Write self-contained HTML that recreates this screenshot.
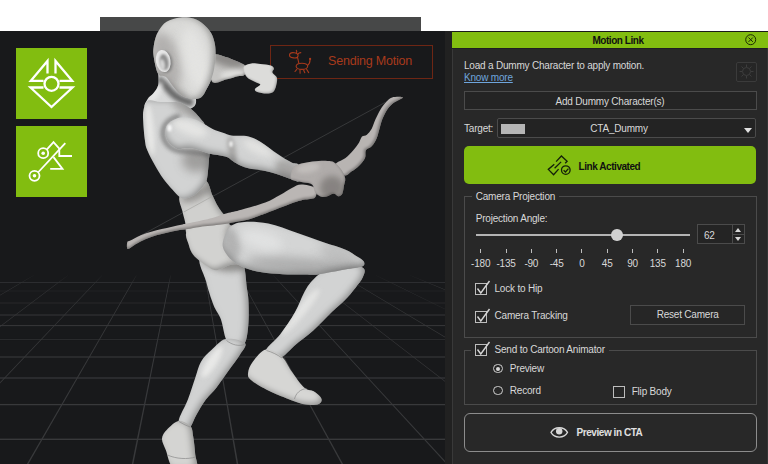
<!DOCTYPE html>
<html><head><meta charset="utf-8"><title>Motion Link</title>
<style>
html,body{margin:0;padding:0;}
body{width:768px;height:464px;overflow:hidden;background:#fff;position:relative;font-family:"Liberation Sans",sans-serif;}
.abs{position:absolute;}

#panel{left:452px;top:31px;width:316px;height:433px;background:#282828;color:#d8d8d8;font-size:10px;letter-spacing:-0.2px;}
#panel .t{position:absolute;white-space:nowrap;line-height:12px;}
#panel .box{position:absolute;box-sizing:border-box;border:1px solid #4b4b4b;}
#panel .cb{position:absolute;box-sizing:border-box;width:12px;height:12px;border:1px solid #bdbdbd;background:#262626;}
.b{font-weight:bold;letter-spacing:-0.45px;}

</style></head><body>
<div class="abs" style="left:100px;top:17px;width:321px;height:14px;background:#474848;"></div>
<div class="abs" style="left:0;top:31px;width:445px;height:433px;background:#18191b;"></div>
<div class="abs" style="left:445px;top:31px;width:7px;height:433px;background:#212121;"></div>
<svg class="abs" style="left:0;top:0" width="452" height="464" viewBox="0 0 452 464">

<defs>
<linearGradient id="gfade" x1="0" y1="0" x2="0" y2="1" gradientUnits="objectBoundingBox">
<stop offset="0" stop-color="#fff" stop-opacity="0"/><stop offset="0.06" stop-color="#fff" stop-opacity="1"/><stop offset="1" stop-color="#fff"/>
</linearGradient>
<mask id="gmask"><rect x="0" y="273" width="445" height="200" fill="url(#gfade)"/></mask>
<clipPath id="vp"><rect x="0" y="31" width="445" height="433"/></clipPath>
<filter id="b1" x="-100%" y="-100%" width="300%" height="300%"><feGaussianBlur stdDeviation="1"/></filter>
<filter id="b2" x="-100%" y="-100%" width="300%" height="300%"><feGaussianBlur stdDeviation="2"/></filter>
<filter id="b3" x="-100%" y="-100%" width="300%" height="300%"><feGaussianBlur stdDeviation="3"/></filter>
<filter id="b5" x="-100%" y="-100%" width="300%" height="300%"><feGaussianBlur stdDeviation="5"/></filter>
<filter id="sh" x="-20%" y="-20%" width="140%" height="140%">
<feGaussianBlur in="SourceAlpha" stdDeviation="2.5" result="bl"/>
<feOffset in="bl" dx="-2" dy="-3" result="off"/>
<feComposite in="SourceAlpha" in2="off" operator="out" result="edge"/>
<feFlood flood-color="#1a1a1a" flood-opacity="0.5"/>
<feComposite in2="edge" operator="in" result="shadow"/>
<feMerge><feMergeNode in="SourceGraphic"/><feMergeNode in="shadow"/></feMerge>
</filter>
<filter id="shR" x="-20%" y="-20%" width="140%" height="140%">
<feGaussianBlur in="SourceAlpha" stdDeviation="3" result="bl"/>
<feOffset in="bl" dx="-3.5" dy="-1" result="off"/>
<feComposite in="SourceAlpha" in2="off" operator="out" result="edge"/>
<feFlood flood-color="#1a1a1a" flood-opacity="0.6"/>
<feComposite in2="edge" operator="in" result="shadow"/>
<feMerge><feMergeNode in="SourceGraphic"/><feMergeNode in="shadow"/></feMerge>
</filter>
<filter id="shB" x="-20%" y="-20%" width="140%" height="140%">
<feGaussianBlur in="SourceAlpha" stdDeviation="3" result="bl"/>
<feOffset in="bl" dx="0" dy="-3.5" result="off"/>
<feComposite in="SourceAlpha" in2="off" operator="out" result="edge"/>
<feFlood flood-color="#1a1a1a" flood-opacity="0.6"/>
<feComposite in2="edge" operator="in" result="shadow"/>
<feMerge><feMergeNode in="SourceGraphic"/><feMergeNode in="shadow"/></feMerge>
</filter>
<filter id="shS" x="-20%" y="-20%" width="140%" height="140%">
<feGaussianBlur in="SourceAlpha" stdDeviation="1.2" result="bl"/>
<feOffset in="bl" dx="-1" dy="-1.5" result="off"/>
<feComposite in="SourceAlpha" in2="off" operator="out" result="edge"/>
<feFlood flood-color="#1a1a1a" flood-opacity="0.5"/>
<feComposite in2="edge" operator="in" result="shadow"/>
<feMerge><feMergeNode in="SourceGraphic"/><feMergeNode in="shadow"/></feMerge>
</filter>
<filter id="shBow" x="-20%" y="-20%" width="140%" height="140%">
<feGaussianBlur in="SourceAlpha" stdDeviation="0.9" result="bl"/>
<feOffset in="bl" dx="-1.6" dy="-1" result="off"/>
<feComposite in="SourceAlpha" in2="off" operator="out" result="edge"/>
<feFlood flood-color="#1a1a1a" flood-opacity="0.55"/>
<feComposite in2="edge" operator="in" result="shadow"/>
<feMerge><feMergeNode in="SourceGraphic"/><feMergeNode in="shadow"/></feMerge>
</filter>
<filter id="shBow2" x="-20%" y="-20%" width="140%" height="140%">
<feGaussianBlur in="SourceAlpha" stdDeviation="0.9" result="bl"/>
<feOffset in="bl" dx="-0.5" dy="-1.8" result="off"/>
<feComposite in="SourceAlpha" in2="off" operator="out" result="edge"/>
<feFlood flood-color="#1a1a1a" flood-opacity="0.55"/>
<feComposite in2="edge" operator="in" result="shadow"/>
<feMerge><feMergeNode in="SourceGraphic"/><feMergeNode in="shadow"/></feMerge>
</filter>
<linearGradient id="gBow" x1="0" y1="0" x2="0" y2="1"><stop offset="0" stop-color="#bcb8b6"/><stop offset="1" stop-color="#8a8684"/></linearGradient>
</defs>
<g clip-path="url(#vp)">
<g fill="#38393b" stroke="none" mask="url(#gmask)">
<polygon points="-206.0,275.3 -205.3,275.3 -1046.3,470 -1047.9,470"/>
<polygon points="-171.8,275.3 -171.1,275.3 -939.2,470 -940.8,470"/>
<polygon points="-137.5,275.3 -136.8,275.3 -832.0,470 -833.6,470"/>
<polygon points="-103.3,275.3 -102.7,275.3 -724.9,470 -726.5,470"/>
<polygon points="-69.2,275.3 -68.5,275.3 -617.8,470 -619.4,470"/>
<polygon points="-35.0,275.3 -34.3,275.3 -510.6,470 -512.2,470"/>
<polygon points="-0.8,275.3 -0.1,275.3 -403.5,470 -405.1,470"/>
<polygon points="33.5,275.3 34.2,275.3 -296.4,470 -298.0,470"/>
<polygon points="67.7,275.3 68.3,275.3 -189.2,470 -190.8,470"/>
<polygon points="101.9,275.3 102.5,275.3 -82.1,470 -83.7,470"/>
<polygon points="136.1,275.3 136.8,275.3 25.0,470 23.4,470"/>
<polygon points="170.3,275.3 171.0,275.3 132.2,470 130.6,470"/>
<polygon points="204.5,275.3 205.2,275.3 239.3,470 237.7,470"/>
<polygon points="238.7,275.3 239.3,275.3 346.4,470 344.8,470"/>
<polygon points="272.9,275.3 273.6,275.3 453.6,470 452.0,470"/>
<polygon points="307.1,275.3 307.8,275.3 560.7,470 559.1,470"/>
<polygon points="341.2,275.3 342.0,275.3 667.8,470 666.2,470"/>
<polygon points="375.4,275.3 376.2,275.3 775.0,470 773.4,470"/>
<polygon points="409.6,275.3 410.4,275.3 882.1,470 880.5,470"/>
<polygon points="443.9,275.3 444.6,275.3 989.2,470 987.6,470"/>
<polygon points="478.1,275.3 478.8,275.3 1096.4,470 1094.8,470"/>
<polygon points="512.2,275.3 513.0,275.3 1203.5,470 1201.9,470"/>
<polygon points="546.4,275.3 547.1,275.3 1310.6,470 1309.0,470"/>
<polygon points="580.6,275.3 581.4,275.3 1417.8,470 1416.2,470"/>
<polygon points="614.9,275.3 615.6,275.3 1524.9,470 1523.3,470"/>
<polygon points="649.1,275.3 649.8,275.3 1632.0,470 1630.4,470"/>
<rect x="0" y="282.09" width="445" height="0.83" opacity="1"/>
<rect x="0" y="290.57" width="445" height="0.86" opacity="0.35"/>
<rect x="0" y="302.55" width="445" height="0.90" opacity="0.55"/>
<rect x="0" y="314.53" width="445" height="0.95" opacity="1"/>
<rect x="0" y="325.11" width="445" height="0.99" opacity="1"/>
<rect x="0" y="338.98" width="445" height="1.04" opacity="0.55"/>
<rect x="0" y="356.45" width="445" height="1.10" opacity="1"/>
<rect x="0" y="377.41" width="445" height="1.18" opacity="1"/>
<rect x="0" y="403.96" width="445" height="1.28" opacity="1"/>
<rect x="0" y="438.60" width="445" height="1.41" opacity="1"/>
</g>
</g>
<!-- sending motion box -->
<rect x="270.5" y="45.5" width="162" height="33" fill="none" stroke="#6e2614" stroke-width="1"/>
<text x="328" y="65.400" font-family="Liberation Sans, sans-serif" font-size="12.5" fill="#a83a1c" letter-spacing="-0.2" >Sending Motion</text>
<g fill="none" stroke="#a83a1c" stroke-width="1.1" stroke-linecap="round" stroke-linejoin="round">
<ellipse cx="293.800" cy="55.300" rx="4.300" ry="2.600" transform="rotate(8 293.800 55.300)"/>
<path d="M296.200,53 C297,52 297,51 296.300,50.300 M298,54 C299,53 300,52.300 300.800,52.800 M297.500,57.300 C298,59 298.300,61 298.800,63 M307.500,65.500 C309,64.500 310,62.500 310.100,59.500 M296.800,69.300 L295,71.500 M300,69.800 L300.100,73.200 M303.600,70 L304.800,72.800 M306.600,69.300 L308.700,72.600"/>
<ellipse cx="301.900" cy="66.300" rx="5.800" ry="3.100"/>
<circle cx="310.100" cy="59" r="0.600"/>
</g>
<!-- green buttons -->
<rect x="16" y="48" width="71" height="71" fill="#82bd10"/>
<rect x="16" y="126" width="71" height="71" fill="#82bd10"/>
<g fill="none" stroke="#fff" stroke-width="2.300" stroke-linejoin="miter">
<path d="M43.500,80.800 H30.800 L47.500,61 V73.500"/>
<path d="M59.500,80.800 H72.200 L55.500,61 V73.500"/>
<path d="M43.500,87.500 H30.500 L51.500,107 L72.500,87.500 H59.500"/>
<circle cx="51.500" cy="83.800" r="7"/>
</g>
<g fill="none" stroke="#fff" stroke-width="1.800" stroke-linejoin="miter">
<circle cx="43.200" cy="153.200" r="5"/>
<circle cx="34.500" cy="175.800" r="5"/>
<path d="M46.500,149.800 L53.500,142.200 L59.300,148.600 V156 H72"/>
<path d="M38,172.500 L65.300,143.200"/>
<path d="M53.500,157.100 L62.500,168.900 H50.200"/>
</g>
<circle cx="43.200" cy="153.200" r="1.800" fill="#fff"/>
<circle cx="34.500" cy="175.800" r="1.800" fill="#fff"/>
<!-- figure -->
<g>
<line x1="140" y1="236" x2="385.300" y2="102.300" stroke="#454648" stroke-width="0.7"/>
<g filter="url(#shS)"><path d="M212.0,56.0 C214.3,51.9 221.6,56.0 225.6,56.9 C229.6,57.8 232.9,59.7 236.2,61.1 C239.5,62.5 243.4,63.9 245.2,65.6 C247.0,67.2 247.2,69.4 247.0,71.0 C246.8,72.6 245.2,74.5 243.7,75.4 C242.1,76.3 240.5,75.6 237.7,76.2 C234.9,76.8 231.4,78.3 227.1,79.2 C222.8,80.1 214.5,85.4 212.0,81.5 C209.5,77.6 209.7,60.1 212.0,56.0Z" fill="#c6c5c3" /><clipPath id="c1"><path d="M212.0,56.0 C214.3,51.9 221.6,56.0 225.6,56.9 C229.6,57.8 232.9,59.7 236.2,61.1 C239.5,62.5 243.4,63.9 245.2,65.6 C247.0,67.2 247.2,69.4 247.0,71.0 C246.8,72.6 245.2,74.5 243.7,75.4 C242.1,76.3 240.5,75.6 237.7,76.2 C234.9,76.8 231.4,78.3 227.1,79.2 C222.8,80.1 214.5,85.4 212.0,81.5 C209.5,77.6 209.7,60.1 212.0,56.0Z"/></clipPath><g clip-path="url(#c1)"><ellipse cx="228" cy="60" rx="18" ry="7" fill="#858381" opacity="0.9" transform="rotate(15 228 60)" filter="url(#b3)"/><ellipse cx="232" cy="74" rx="12" ry="4" fill="#e4e4e2" opacity="0.8" transform="rotate(-8 232 74)" filter="url(#b2)"/></g></g>
<path d="M243.7,67.1 C244.4,64.8 248.5,63.9 251.3,63.4 C254.1,62.9 257.0,63.7 260.3,64.1 C263.6,64.5 268.6,64.8 270.9,65.6 C273.2,66.4 273.6,67.6 273.9,68.7 C274.1,69.8 271.9,70.9 272.4,72.4 C272.9,73.9 276.3,75.6 276.9,77.7 C277.5,79.8 276.8,82.8 276.2,85.2 C275.6,87.6 274.7,90.6 273.1,92.0 C271.5,93.4 269.0,93.5 266.4,93.5 C263.8,93.5 259.2,92.8 257.3,92.0 C255.4,91.2 254.5,90.2 255.0,89.0 C255.5,87.8 260.2,85.6 260.3,84.5 C260.4,83.4 258.1,83.5 255.8,82.2 C253.6,81.0 248.8,79.5 246.8,77.0 C244.8,74.5 242.9,69.4 243.7,67.1Z" fill="#dcdcda" filter="url(#shS)" />
<g ><path d="M160.0,68.0 C156.7,69.1 159.4,80.6 158.3,84.8 C157.2,89.0 155.2,90.9 153.4,93.2 C151.7,95.5 149.0,96.3 147.8,98.8 C146.6,101.3 142.3,105.8 146.0,108.0 C149.7,110.2 162.3,112.0 170.0,112.0 C177.7,112.0 187.7,110.2 192.0,108.0 C196.3,105.8 196.3,102.3 196.0,99.0 C195.7,95.7 193.0,91.5 190.0,88.0 C187.0,84.5 183.0,81.3 178.0,78.0 C173.0,74.7 163.3,66.9 160.0,68.0Z" fill="#d8d9d9" /><clipPath id="c2"><path d="M160.0,68.0 C156.7,69.1 159.4,80.6 158.3,84.8 C157.2,89.0 155.2,90.9 153.4,93.2 C151.7,95.5 149.0,96.3 147.8,98.8 C146.6,101.3 142.3,105.8 146.0,108.0 C149.7,110.2 162.3,112.0 170.0,112.0 C177.7,112.0 187.7,110.2 192.0,108.0 C196.3,105.8 196.3,102.3 196.0,99.0 C195.7,95.7 193.0,91.5 190.0,88.0 C187.0,84.5 183.0,81.3 178.0,78.0 C173.0,74.7 163.3,66.9 160.0,68.0Z"/></clipPath><g clip-path="url(#c2)"><path d="M158,79 C163,82 166,86 170,91 C175,97 182,101 193,103" fill="none" stroke="#4a4a4a" stroke-width="7" opacity="0.8" filter="url(#b2)"/><ellipse cx="156" cy="92" rx="4" ry="12" fill="#f2f2f2" opacity="0.6" transform="rotate(30 156 92)" filter="url(#b2)"/></g></g>
<g filter="url(#shR)"><path d="M201.3,256.0 C195.6,260.2 204.0,273.0 206.0,281.1 C208.0,289.2 211.0,298.6 213.5,304.9 C216.0,311.2 218.6,313.1 220.8,319.0 C223.0,324.9 224.1,335.8 226.5,340.3 C228.9,344.8 231.9,345.6 235.0,346.0 C238.1,346.4 242.7,346.4 244.9,342.7 C247.1,339.0 247.8,330.8 248.4,323.7 C249.0,316.6 248.7,305.9 248.4,300.0 C248.2,294.1 247.6,293.6 246.9,288.3 C246.2,283.0 245.7,273.5 244.5,268.1 C243.3,262.7 247.2,258.0 240.0,256.0 C232.8,254.0 207.0,251.8 201.3,256.0Z" fill="#d2d3d3" /><clipPath id="c3"><path d="M201.3,256.0 C195.6,260.2 204.0,273.0 206.0,281.1 C208.0,289.2 211.0,298.6 213.5,304.9 C216.0,311.2 218.6,313.1 220.8,319.0 C223.0,324.9 224.1,335.8 226.5,340.3 C228.9,344.8 231.9,345.6 235.0,346.0 C238.1,346.4 242.7,346.4 244.9,342.7 C247.1,339.0 247.8,330.8 248.4,323.7 C249.0,316.6 248.7,305.9 248.4,300.0 C248.2,294.1 247.6,293.6 246.9,288.3 C246.2,283.0 245.7,273.5 244.5,268.1 C243.3,262.7 247.2,258.0 240.0,256.0 C232.8,254.0 207.0,251.8 201.3,256.0Z"/></clipPath><g clip-path="url(#c3)"><ellipse cx="224" cy="262" rx="22" ry="9" fill="#7d7b79" opacity="0.8" transform="rotate(10 224 262)" filter="url(#b3)"/></g></g>
<g filter="url(#shR)"><path d="M225.9,339.0 C220.4,340.1 215.8,346.0 211.7,349.8 C207.5,353.6 203.8,356.9 201.0,361.7 C198.2,366.4 197.3,372.0 195.1,378.3 C192.9,384.6 190.7,392.5 187.9,399.6 C185.2,406.7 179.2,416.3 178.6,421.0 C177.9,425.7 182.1,427.0 184.0,428.0 C185.9,429.0 188.3,429.0 190.3,426.9 C192.3,424.8 193.6,419.8 196.2,415.2 C198.8,410.6 202.5,404.1 205.9,399.5 C209.3,394.9 212.7,392.4 216.4,387.7 C220.1,383.0 224.4,376.6 228.3,371.1 C232.2,365.6 237.3,359.2 240.1,354.5 C242.9,349.8 247.3,345.6 244.9,343.0 C242.5,340.4 231.4,337.9 225.9,339.0Z" fill="#d2d3d3" /><clipPath id="c4"><path d="M225.9,339.0 C220.4,340.1 215.8,346.0 211.7,349.8 C207.5,353.6 203.8,356.9 201.0,361.7 C198.2,366.4 197.3,372.0 195.1,378.3 C192.9,384.6 190.7,392.5 187.9,399.6 C185.2,406.7 179.2,416.3 178.6,421.0 C177.9,425.7 182.1,427.0 184.0,428.0 C185.9,429.0 188.3,429.0 190.3,426.9 C192.3,424.8 193.6,419.8 196.2,415.2 C198.8,410.6 202.5,404.1 205.9,399.5 C209.3,394.9 212.7,392.4 216.4,387.7 C220.1,383.0 224.4,376.6 228.3,371.1 C232.2,365.6 237.3,359.2 240.1,354.5 C242.9,349.8 247.3,345.6 244.9,343.0 C242.5,340.4 231.4,337.9 225.9,339.0Z"/></clipPath><g clip-path="url(#c4)"><ellipse cx="212" cy="362" rx="5" ry="18" fill="#f2f2f0" opacity="0.7" transform="rotate(32 212 362)" filter="url(#b2)"/></g></g>
<path d="M178.6,421.0 C174.7,421.6 169.7,426.9 166.9,429.8 C164.1,432.7 162.2,435.2 162.0,438.6 C161.8,442.0 164.0,445.4 165.9,450.3 C167.8,455.2 168.7,465.1 173.7,468.0 C178.7,470.9 192.2,470.3 195.8,468.0 C199.4,465.7 195.6,459.4 195.2,454.2 C194.8,449.0 194.0,441.3 193.2,436.6 C192.4,431.9 192.7,428.6 190.3,426.0 C187.9,423.4 182.5,420.4 178.6,421.0Z" fill="#d4d4d2" filter="url(#shR)" />
<g filter="url(#shR)"><path d="M179.8,196.0 C177.7,199.6 181.6,207.1 182.5,211.5 C183.4,215.9 184.3,218.3 185.2,222.4 C186.1,226.5 184.7,233.1 188.0,236.0 C191.3,238.9 198.7,240.3 205.0,240.0 C211.3,239.7 222.0,237.0 226.0,234.0 C230.0,231.0 229.8,225.8 229.0,222.0 C228.2,218.2 223.3,214.2 221.4,211.5 C219.5,208.8 219.3,208.8 217.8,206.1 C216.3,203.4 214.4,199.4 212.4,195.2 C210.4,191.0 209.0,181.9 206.1,181.0 C203.2,180.1 199.4,187.5 195.0,190.0 C190.6,192.5 181.9,192.4 179.8,196.0Z" fill="#d0d0ce" /><clipPath id="c5"><path d="M179.8,196.0 C177.7,199.6 181.6,207.1 182.5,211.5 C183.4,215.9 184.3,218.3 185.2,222.4 C186.1,226.5 184.7,233.1 188.0,236.0 C191.3,238.9 198.7,240.3 205.0,240.0 C211.3,239.7 222.0,237.0 226.0,234.0 C230.0,231.0 229.8,225.8 229.0,222.0 C228.2,218.2 223.3,214.2 221.4,211.5 C219.5,208.8 219.3,208.8 217.8,206.1 C216.3,203.4 214.4,199.4 212.4,195.2 C210.4,191.0 209.0,181.9 206.1,181.0 C203.2,180.1 199.4,187.5 195.0,190.0 C190.6,192.5 181.9,192.4 179.8,196.0Z"/></clipPath><g clip-path="url(#c5)"><ellipse cx="196" cy="194" rx="16" ry="6" fill="#8a8886" opacity="0.8" transform="rotate(-25 196 194)" filter="url(#b3)"/></g></g>
<g filter="url(#sh)"><path d="M187.5,231.0 C183.6,234.8 187.9,241.1 188.8,245.0 C189.7,248.9 191.1,251.8 193.0,254.5 C194.9,257.2 198.2,259.6 200.5,261.5 C202.8,263.4 204.7,264.6 207.0,266.0 C209.3,267.4 212.0,269.6 214.3,270.1 C216.6,270.6 218.6,269.8 221.0,269.0 C223.4,268.2 224.9,266.6 228.6,265.4 C232.3,264.2 241.1,266.2 243.0,262.0 C244.9,257.8 241.8,246.0 240.0,240.0 C238.2,234.0 236.7,229.0 232.0,226.0 C227.3,223.0 219.4,221.2 212.0,222.0 C204.6,222.8 191.4,227.2 187.5,231.0Z" fill="#d2d2d0" /><clipPath id="c6"><path d="M187.5,231.0 C183.6,234.8 187.9,241.1 188.8,245.0 C189.7,248.9 191.1,251.8 193.0,254.5 C194.9,257.2 198.2,259.6 200.5,261.5 C202.8,263.4 204.7,264.6 207.0,266.0 C209.3,267.4 212.0,269.6 214.3,270.1 C216.6,270.6 218.6,269.8 221.0,269.0 C223.4,268.2 224.9,266.6 228.6,265.4 C232.3,264.2 241.1,266.2 243.0,262.0 C244.9,257.8 241.8,246.0 240.0,240.0 C238.2,234.0 236.7,229.0 232.0,226.0 C227.3,223.0 219.4,221.2 212.0,222.0 C204.6,222.8 191.4,227.2 187.5,231.0Z"/></clipPath><g clip-path="url(#c6)"><ellipse cx="236" cy="244" rx="9" ry="20" fill="#8a8886" opacity="0.9" transform="rotate(-15 236 244)" filter="url(#b3)"/></g></g>
<line x1="184" y1="211.9" x2="213" y2="196.0" stroke="#a6a6a4" stroke-width="0.7"/>
<g filter="url(#shR)"><path d="M160.2,102.0 C155.7,101.8 150.9,99.2 148.1,100.5 C145.3,101.8 144.3,106.5 143.5,110.0 C142.7,113.5 143.0,116.2 143.2,121.3 C143.4,126.3 144.2,135.5 144.9,140.3 C145.6,145.1 145.6,146.0 147.2,150.0 C148.8,154.0 151.8,159.7 154.5,164.5 C157.2,169.3 160.5,174.8 163.5,179.0 C166.5,183.2 169.9,186.8 172.6,189.8 C175.3,192.8 177.7,195.7 179.8,197.1 C181.9,198.5 182.8,198.8 185.2,198.5 C187.6,198.2 191.3,197.2 194.3,195.2 C197.3,193.1 201.2,188.9 203.3,186.2 C205.4,183.5 206.1,183.2 207.0,179.0 C207.9,174.8 208.4,165.7 208.8,160.9 C209.2,156.1 209.9,154.3 209.7,150.0 C209.5,145.7 208.4,139.4 207.5,135.0 C206.6,130.6 205.3,126.0 204.3,123.5 C203.3,121.0 203.4,122.0 201.6,119.9 C199.8,117.8 196.6,113.6 193.4,110.9 C190.2,108.2 185.6,105.1 182.6,103.6 C179.6,102.1 178.9,102.3 175.2,102.0 C171.5,101.7 164.7,102.2 160.2,102.0Z" fill="#d2d3d3" /><clipPath id="c7"><path d="M160.2,102.0 C155.7,101.8 150.9,99.2 148.1,100.5 C145.3,101.8 144.3,106.5 143.5,110.0 C142.7,113.5 143.0,116.2 143.2,121.3 C143.4,126.3 144.2,135.5 144.9,140.3 C145.6,145.1 145.6,146.0 147.2,150.0 C148.8,154.0 151.8,159.7 154.5,164.5 C157.2,169.3 160.5,174.8 163.5,179.0 C166.5,183.2 169.9,186.8 172.6,189.8 C175.3,192.8 177.7,195.7 179.8,197.1 C181.9,198.5 182.8,198.8 185.2,198.5 C187.6,198.2 191.3,197.2 194.3,195.2 C197.3,193.1 201.2,188.9 203.3,186.2 C205.4,183.5 206.1,183.2 207.0,179.0 C207.9,174.8 208.4,165.7 208.8,160.9 C209.2,156.1 209.9,154.3 209.7,150.0 C209.5,145.7 208.4,139.4 207.5,135.0 C206.6,130.6 205.3,126.0 204.3,123.5 C203.3,121.0 203.4,122.0 201.6,119.9 C199.8,117.8 196.6,113.6 193.4,110.9 C190.2,108.2 185.6,105.1 182.6,103.6 C179.6,102.1 178.9,102.3 175.2,102.0 C171.5,101.7 164.7,102.2 160.2,102.0Z"/></clipPath><g clip-path="url(#c7)"><ellipse cx="196" cy="160" rx="14" ry="12" fill="#8f8d8b" opacity="0.75" transform="rotate(0 196 160)" filter="url(#b5)"/><ellipse cx="186" cy="110" rx="16" ry="5" fill="#9a9896" opacity="0.7" transform="rotate(30 186 110)" filter="url(#b3)"/><ellipse cx="150" cy="130" rx="4" ry="26" fill="#f0f0ee" opacity="0.7" transform="rotate(-5 150 130)" filter="url(#b2)"/><path d="M180,116 C170,118 163,124 163,133 C163,142 170,150 180,151 C190,152 200,152 210,155" fill="none" stroke="#5a5a5a" stroke-width="4" opacity="0.75" filter="url(#b2)"/></g></g>
<g filter="url(#shR)"><path d="M180.6,17.4 C185.1,16.9 189.7,17.4 193.5,18.5 C197.3,19.6 200.3,21.6 203.2,23.9 C206.1,26.2 208.9,29.4 210.8,32.5 C212.7,35.5 213.7,38.8 214.5,42.2 C215.3,45.6 215.6,48.7 215.6,53.0 C215.6,57.3 215.1,63.4 214.3,68.0 C213.5,72.6 212.1,77.1 210.8,80.6 C209.5,84.1 208.2,86.2 206.6,89.0 C205.0,91.8 203.6,95.8 201.0,97.4 C198.4,99.0 194.5,99.2 191.2,98.8 C187.9,98.4 184.4,97.4 181.4,95.3 C178.4,93.2 175.6,89.2 173.0,86.2 C170.4,83.2 168.3,78.9 166.0,77.0 C163.7,75.1 160.8,76.8 159.0,75.0 C157.2,73.2 156.4,69.5 155.5,66.0 C154.6,62.5 153.7,57.1 153.4,54.0 C153.1,50.9 153.3,50.1 153.6,47.6 C153.9,45.1 154.3,41.9 155.2,39.0 C156.1,36.1 157.1,33.2 159.0,30.3 C160.9,27.4 163.0,23.9 166.6,21.7 C170.2,19.5 176.1,17.9 180.6,17.4Z" fill="#d9d9d7" /><clipPath id="c8"><path d="M180.6,17.4 C185.1,16.9 189.7,17.4 193.5,18.5 C197.3,19.6 200.3,21.6 203.2,23.9 C206.1,26.2 208.9,29.4 210.8,32.5 C212.7,35.5 213.7,38.8 214.5,42.2 C215.3,45.6 215.6,48.7 215.6,53.0 C215.6,57.3 215.1,63.4 214.3,68.0 C213.5,72.6 212.1,77.1 210.8,80.6 C209.5,84.1 208.2,86.2 206.6,89.0 C205.0,91.8 203.6,95.8 201.0,97.4 C198.4,99.0 194.5,99.2 191.2,98.8 C187.9,98.4 184.4,97.4 181.4,95.3 C178.4,93.2 175.6,89.2 173.0,86.2 C170.4,83.2 168.3,78.9 166.0,77.0 C163.7,75.1 160.8,76.8 159.0,75.0 C157.2,73.2 156.4,69.5 155.5,66.0 C154.6,62.5 153.7,57.1 153.4,54.0 C153.1,50.9 153.3,50.1 153.6,47.6 C153.9,45.1 154.3,41.9 155.2,39.0 C156.1,36.1 157.1,33.2 159.0,30.3 C160.9,27.4 163.0,23.9 166.6,21.7 C170.2,19.5 176.1,17.9 180.6,17.4Z"/></clipPath><g clip-path="url(#c8)"><ellipse cx="166" cy="62" rx="14" ry="30" fill="#a8a6a4" opacity="0.8" transform="rotate(-12 166 62)" filter="url(#b5)"/><ellipse cx="196" cy="60" rx="12" ry="34" fill="#e6e6e4" opacity="0.8" transform="rotate(-14 196 60)" filter="url(#b5)"/><ellipse cx="176" cy="92" rx="14" ry="5" fill="#8f8d8b" opacity="0.6" transform="rotate(35 176 92)" filter="url(#b3)"/></g></g>
<ellipse cx="165.200" cy="62" rx="7.300" ry="11.200" fill="#7a7a7a" opacity="0.8" transform="rotate(-10 165.200 62)" filter="url(#b1)"/>
<ellipse cx="163.200" cy="61" rx="7.300" ry="11.200" fill="#e6e6e6" transform="rotate(-10 163.200 61)"/>
<ellipse cx="164.200" cy="62" rx="4.300" ry="8" fill="#8e8e8e" transform="rotate(-10 164.200 62)" filter="url(#b1)"/>
<ellipse cx="162.300" cy="64.500" rx="2.600" ry="5.500" fill="#d4d4d4" transform="rotate(-10 162.300 64.500)" filter="url(#b1)"/>
<path d="M315.0,188.0 C312.7,185.8 305.2,184.4 301.3,184.4 C297.4,184.4 295.4,186.1 291.9,187.9 C288.3,189.7 284.4,192.6 280.0,195.0 C275.6,197.4 271.7,200.1 265.3,202.5 C258.9,204.9 247.8,207.9 241.4,209.7 C235.0,211.5 231.7,211.9 226.9,213.3 C222.1,214.7 218.1,216.4 212.4,217.9 C206.7,219.4 197.9,221.2 192.9,222.3 C187.9,223.4 186.0,223.7 182.5,224.4 C179.0,225.1 175.6,225.9 172.1,226.7 C168.6,227.5 165.2,228.3 161.7,229.1 C158.2,229.9 154.8,230.7 151.3,231.7 C147.8,232.7 144.3,233.8 140.8,235.3 C137.3,236.8 132.7,239.4 130.4,240.5 C128.2,241.6 127.7,240.7 127.3,242.1 C126.9,243.5 126.4,248.6 127.8,248.9 C129.2,249.2 132.6,245.8 135.6,244.2 C138.6,242.5 142.5,240.5 146.0,239.0 C149.5,237.5 153.0,236.4 156.5,235.3 C160.0,234.2 163.4,233.5 166.9,232.7 C170.4,231.9 173.8,231.2 177.3,230.6 C180.8,230.0 183.9,229.7 187.7,229.1 C191.5,228.5 194.4,227.8 200.0,227.0 C205.6,226.2 215.7,225.4 221.4,224.6 C227.1,223.8 229.6,223.0 234.1,222.2 C238.6,221.3 244.3,220.6 248.6,219.5 C252.9,218.4 256.9,216.6 260.0,215.5 C263.1,214.4 262.1,214.8 267.4,212.8 C272.7,210.8 285.8,205.5 291.9,203.3 C297.9,201.1 299.8,200.8 303.7,199.8 C307.6,198.8 313.1,199.4 315.0,197.4 C316.9,195.4 317.3,190.2 315.0,188.0Z" fill="#bab6b4" filter="url(#shBow2)" />
<g filter="url(#shR)"><path d="M330.0,268.0 C335.2,266.2 344.4,263.9 350.0,264.0 C355.6,264.1 361.7,266.2 363.8,268.5 C365.9,270.8 364.1,274.3 362.7,277.5 C361.3,280.7 358.3,284.1 355.4,287.9 C352.4,291.6 349.0,295.9 345.0,300.0 C341.0,304.1 336.9,307.2 331.6,312.3 C326.3,317.4 319.4,325.1 313.3,330.6 C307.2,336.1 300.2,340.9 295.0,345.3 C289.8,349.7 285.9,355.2 282.1,357.0 C278.3,358.8 274.7,357.2 272.0,356.0 C269.3,354.8 264.6,353.6 266.0,350.0 C267.4,346.4 275.5,340.6 280.3,334.3 C285.1,328.0 291.2,319.0 295.0,312.3 C298.8,305.6 300.9,298.9 303.3,294.2 C305.7,289.4 307.0,287.1 309.6,283.8 C312.2,280.5 315.4,277.1 318.8,274.5 C322.2,271.9 324.8,269.8 330.0,268.0Z" fill="#d2d3d3" /><clipPath id="c9"><path d="M330.0,268.0 C335.2,266.2 344.4,263.9 350.0,264.0 C355.6,264.1 361.7,266.2 363.8,268.5 C365.9,270.8 364.1,274.3 362.7,277.5 C361.3,280.7 358.3,284.1 355.4,287.9 C352.4,291.6 349.0,295.9 345.0,300.0 C341.0,304.1 336.9,307.2 331.6,312.3 C326.3,317.4 319.4,325.1 313.3,330.6 C307.2,336.1 300.2,340.9 295.0,345.3 C289.8,349.7 285.9,355.2 282.1,357.0 C278.3,358.8 274.7,357.2 272.0,356.0 C269.3,354.8 264.6,353.6 266.0,350.0 C267.4,346.4 275.5,340.6 280.3,334.3 C285.1,328.0 291.2,319.0 295.0,312.3 C298.8,305.6 300.9,298.9 303.3,294.2 C305.7,289.4 307.0,287.1 309.6,283.8 C312.2,280.5 315.4,277.1 318.8,274.5 C322.2,271.9 324.8,269.8 330.0,268.0Z"/></clipPath><g clip-path="url(#c9)"><ellipse cx="300" cy="312" rx="5" ry="30" fill="#efefed" opacity="0.6" transform="rotate(40 300 312)" filter="url(#b2)"/></g></g>
<path d="M266.0,349.5 C261.1,350.3 255.8,357.9 252.8,361.8 C249.8,365.7 248.4,369.8 248.1,372.8 C247.8,375.9 247.5,377.1 251.0,380.1 C254.5,383.2 262.6,387.8 269.3,391.1 C276.0,394.5 285.2,397.9 291.3,400.2 C297.4,402.4 301.4,404.0 306.0,404.6 C310.6,405.2 316.2,404.9 318.8,403.9 C321.4,402.9 322.2,400.5 321.3,398.4 C320.4,396.3 316.2,392.9 313.3,391.1 C310.4,389.3 307.8,390.8 304.1,387.4 C300.4,384.0 295.0,376.0 291.3,370.9 C287.6,365.8 286.3,360.6 282.1,357.0 C277.9,353.4 270.9,348.7 266.0,349.5Z" fill="#d6d6d4" filter="url(#sh)" />
<g filter="url(#shB)"><path d="M230.3,226.6 C233.9,223.4 238.2,222.4 244.5,221.9 C250.8,221.4 259.6,221.8 268.3,223.6 C277.0,225.4 287.4,229.7 296.7,232.8 C306.0,236.0 316.1,239.7 324.2,242.5 C332.2,245.3 339.4,247.0 345.0,249.4 C350.6,251.8 354.4,254.7 357.5,256.7 C360.6,258.7 363.1,259.9 363.8,261.5 C364.6,263.1 365.1,265.2 362.0,266.5 C358.9,267.8 352.4,268.2 345.0,269.5 C337.6,270.8 324.8,273.5 317.9,274.4 C310.9,275.2 309.2,274.6 303.3,274.6 C297.4,274.6 289.4,274.6 282.5,274.2 C275.6,273.8 267.9,273.3 261.7,272.3 C255.4,271.3 249.9,270.0 245.0,268.1 C240.1,266.2 236.0,263.8 232.5,260.8 C229.0,257.9 225.8,253.7 224.2,250.4 C222.6,247.1 222.2,244.8 223.2,240.8 C224.2,236.8 226.8,229.8 230.3,226.6Z" fill="#d4d5d5" /><clipPath id="c10"><path d="M230.3,226.6 C233.9,223.4 238.2,222.4 244.5,221.9 C250.8,221.4 259.6,221.8 268.3,223.6 C277.0,225.4 287.4,229.7 296.7,232.8 C306.0,236.0 316.1,239.7 324.2,242.5 C332.2,245.3 339.4,247.0 345.0,249.4 C350.6,251.8 354.4,254.7 357.5,256.7 C360.6,258.7 363.1,259.9 363.8,261.5 C364.6,263.1 365.1,265.2 362.0,266.5 C358.9,267.8 352.4,268.2 345.0,269.5 C337.6,270.8 324.8,273.5 317.9,274.4 C310.9,275.2 309.2,274.6 303.3,274.6 C297.4,274.6 289.4,274.6 282.5,274.2 C275.6,273.8 267.9,273.3 261.7,272.3 C255.4,271.3 249.9,270.0 245.0,268.1 C240.1,266.2 236.0,263.8 232.5,260.8 C229.0,257.9 225.8,253.7 224.2,250.4 C222.6,247.1 222.2,244.8 223.2,240.8 C224.2,236.8 226.8,229.8 230.3,226.6Z"/></clipPath><g clip-path="url(#c10)"><ellipse cx="232" cy="244" rx="8" ry="16" fill="#a5a5a5" opacity="0.7" transform="rotate(-10 232 244)" filter="url(#b3)"/><ellipse cx="305" cy="266" rx="60" ry="8" fill="#8f8f8f" opacity="0.55" transform="rotate(4 305 266)" filter="url(#b5)"/><ellipse cx="340" cy="256" rx="22" ry="10" fill="#a8a8a8" opacity="0.45" transform="rotate(25 340 256)" filter="url(#b5)"/><ellipse cx="262" cy="240" rx="22" ry="9" fill="#e6e7e7" opacity="0.7" transform="rotate(15 262 240)" filter="url(#b5)"/></g></g>
<g fill="none" stroke="#8c8c8c" stroke-width="0.800" opacity="0.9">
<path d="M226.500,340.500 C232,345 239,346.500 244.500,344.500"/>
<path d="M294.500,399 C296,393 300,389.500 306.500,388.500"/>
<path d="M167.500,455 C176,459 188,459.500 195.500,457"/>
<path d="M266.500,350.500 C272,352 278,355 282,358"/>
<path d="M179,421.500 C183,424 187,426 190.500,427"/>
</g>
<path d="M402.8,97.4 C402.5,96.5 394.9,96.7 392.1,97.4 C389.4,98.1 388.2,99.7 386.3,101.7 C384.4,103.7 382.3,106.5 380.5,109.4 C378.7,112.3 377.1,115.9 375.6,119.1 C374.1,122.3 373.1,126.2 371.7,128.8 C370.2,131.4 368.5,133.4 366.9,134.7 C365.3,136.0 363.3,135.3 362.0,136.6 C360.7,137.9 360.6,140.1 359.1,142.4 C357.7,144.7 355.6,147.6 353.3,150.2 C351.0,152.8 348.4,155.7 345.5,158.0 C342.6,160.3 337.4,161.5 335.8,163.8 C334.2,166.1 334.4,170.1 336.0,172.0 C337.6,173.9 342.9,175.5 345.5,175.4 C348.1,175.3 349.1,173.2 351.4,171.6 C353.7,170.0 356.8,168.0 359.1,165.7 C361.4,163.4 363.9,160.6 365.0,158.0 C366.1,155.4 364.8,152.1 365.9,150.2 C367.0,148.2 369.9,148.2 371.7,146.3 C373.5,144.4 375.3,141.4 376.6,138.5 C377.9,135.6 378.5,132.0 379.5,128.8 C380.5,125.6 381.1,122.3 382.4,119.1 C383.7,115.9 385.4,112.2 387.3,109.4 C389.2,106.7 391.5,104.6 394.1,102.6 C396.7,100.6 403.1,98.3 402.8,97.4Z" fill="#b8b4b2" filter="url(#shBow)" />
<g filter="url(#shB)"><path d="M170.0,122.0 C172.9,119.7 178.4,117.6 182.6,117.2 C186.8,116.8 191.4,118.3 195.0,119.5 C198.6,120.7 201.1,122.5 204.1,124.1 C207.1,125.7 210.1,127.9 213.1,129.3 C216.1,130.7 219.2,131.4 222.2,132.4 C225.2,133.4 228.7,134.8 231.2,135.4 C233.7,136.0 234.8,135.7 237.3,135.8 C239.8,135.9 243.3,135.6 246.3,136.1 C249.3,136.6 252.4,137.7 255.4,139.1 C258.4,140.5 261.4,142.4 264.4,144.4 C267.4,146.4 270.5,149.0 273.5,151.2 C276.5,153.3 279.5,155.4 282.5,157.3 C285.5,159.2 288.8,161.1 291.6,162.5 C294.4,163.9 297.9,162.5 299.1,165.6 C300.3,168.7 300.2,178.8 299.0,181.0 C297.8,183.2 294.6,180.0 291.6,179.1 C288.6,178.2 284.5,176.5 281.0,175.4 C277.5,174.3 274.0,173.2 270.5,172.3 C267.0,171.4 263.4,170.7 259.9,170.1 C256.4,169.5 252.6,169.3 249.3,168.6 C246.0,167.8 243.1,166.9 240.3,165.6 C237.5,164.3 234.8,162.4 232.7,161.0 C230.5,159.6 229.9,158.3 227.4,157.3 C224.9,156.3 220.7,155.6 217.6,155.0 C214.5,154.4 212.3,154.5 208.6,153.5 C204.9,152.5 198.9,149.8 195.2,148.9 C191.5,148.0 189.2,148.0 186.2,148.0 C183.2,148.0 180.1,150.0 177.1,148.9 C174.1,147.8 170.0,144.6 168.1,141.6 C166.2,138.6 165.1,134.1 165.4,130.8 C165.7,127.5 167.1,124.3 170.0,122.0Z" fill="#d2d3d3" /><clipPath id="c11"><path d="M170.0,122.0 C172.9,119.7 178.4,117.6 182.6,117.2 C186.8,116.8 191.4,118.3 195.0,119.5 C198.6,120.7 201.1,122.5 204.1,124.1 C207.1,125.7 210.1,127.9 213.1,129.3 C216.1,130.7 219.2,131.4 222.2,132.4 C225.2,133.4 228.7,134.8 231.2,135.4 C233.7,136.0 234.8,135.7 237.3,135.8 C239.8,135.9 243.3,135.6 246.3,136.1 C249.3,136.6 252.4,137.7 255.4,139.1 C258.4,140.5 261.4,142.4 264.4,144.4 C267.4,146.4 270.5,149.0 273.5,151.2 C276.5,153.3 279.5,155.4 282.5,157.3 C285.5,159.2 288.8,161.1 291.6,162.5 C294.4,163.9 297.9,162.5 299.1,165.6 C300.3,168.7 300.2,178.8 299.0,181.0 C297.8,183.2 294.6,180.0 291.6,179.1 C288.6,178.2 284.5,176.5 281.0,175.4 C277.5,174.3 274.0,173.2 270.5,172.3 C267.0,171.4 263.4,170.7 259.9,170.1 C256.4,169.5 252.6,169.3 249.3,168.6 C246.0,167.8 243.1,166.9 240.3,165.6 C237.5,164.3 234.8,162.4 232.7,161.0 C230.5,159.6 229.9,158.3 227.4,157.3 C224.9,156.3 220.7,155.6 217.6,155.0 C214.5,154.4 212.3,154.5 208.6,153.5 C204.9,152.5 198.9,149.8 195.2,148.9 C191.5,148.0 189.2,148.0 186.2,148.0 C183.2,148.0 180.1,150.0 177.1,148.9 C174.1,147.8 170.0,144.6 168.1,141.6 C166.2,138.6 165.1,134.1 165.4,130.8 C165.7,127.5 167.1,124.3 170.0,122.0Z"/></clipPath><g clip-path="url(#c11)"><ellipse cx="232" cy="150" rx="4" ry="14" fill="#8a8886" opacity="0.55" transform="rotate(-10 232 150)" filter="url(#b2)"/><ellipse cx="190" cy="128" rx="18" ry="7" fill="#e9e9e7" opacity="0.8" transform="rotate(20 190 128)" filter="url(#b3)"/><ellipse cx="258" cy="148" rx="16" ry="6" fill="#e6e6e4" opacity="0.8" transform="rotate(25 258 148)" filter="url(#b3)"/><ellipse cx="288" cy="170" rx="14" ry="9" fill="#8a8886" opacity="0.6" transform="rotate(30 288 170)" filter="url(#b3)"/></g></g>
<ellipse cx="169.500" cy="128" rx="2.200" ry="3.500" fill="#fff" opacity="0.85" filter="url(#b1)"/>
<ellipse cx="231" cy="144" rx="1.800" ry="3" fill="#fff" opacity="0.8" filter="url(#b1)"/>
<g filter="url(#shS)"><path d="M293.0,167.8 C294.4,165.4 296.2,165.2 299.0,164.2 C301.8,163.2 305.9,162.5 309.6,161.9 C313.4,161.3 317.9,160.8 321.5,160.7 C325.1,160.6 328.6,160.8 331.0,161.3 C333.4,161.8 333.9,162.1 335.7,163.6 C337.5,165.1 340.0,167.6 341.6,170.1 C343.2,172.6 344.8,175.8 345.2,178.4 C345.6,181.0 344.5,183.0 344.0,185.6 C343.5,188.2 343.2,192.1 342.2,193.9 C341.2,195.7 339.5,196.2 338.1,196.2 C336.7,196.1 335.7,193.6 333.9,193.6 C332.1,193.6 329.5,195.7 327.4,196.2 C325.3,196.7 323.5,197.4 321.5,196.8 C319.5,196.2 317.2,194.8 315.6,192.7 C314.0,190.6 314.0,186.1 312.0,184.4 C310.0,182.7 306.3,183.2 303.7,182.6 C301.1,182.0 298.8,181.5 296.6,180.8 C294.4,180.1 291.3,180.6 290.7,178.4 C290.1,176.2 291.6,170.2 293.0,167.8Z" fill="#b0acaa" /><clipPath id="c12"><path d="M293.0,167.8 C294.4,165.4 296.2,165.2 299.0,164.2 C301.8,163.2 305.9,162.5 309.6,161.9 C313.4,161.3 317.9,160.8 321.5,160.7 C325.1,160.6 328.6,160.8 331.0,161.3 C333.4,161.8 333.9,162.1 335.7,163.6 C337.5,165.1 340.0,167.6 341.6,170.1 C343.2,172.6 344.8,175.8 345.2,178.4 C345.6,181.0 344.5,183.0 344.0,185.6 C343.5,188.2 343.2,192.1 342.2,193.9 C341.2,195.7 339.5,196.2 338.1,196.2 C336.7,196.1 335.7,193.6 333.9,193.6 C332.1,193.6 329.5,195.7 327.4,196.2 C325.3,196.7 323.5,197.4 321.5,196.8 C319.5,196.2 317.2,194.8 315.6,192.7 C314.0,190.6 314.0,186.1 312.0,184.4 C310.0,182.7 306.3,183.2 303.7,182.6 C301.1,182.0 298.8,181.5 296.6,180.8 C294.4,180.1 291.3,180.6 290.7,178.4 C290.1,176.2 291.6,170.2 293.0,167.8Z"/></clipPath><g clip-path="url(#c12)"><ellipse cx="332" cy="188" rx="12" ry="12" fill="#7d7977" opacity="0.8" transform="rotate(0 332 188)" filter="url(#b3)"/><ellipse cx="308" cy="168" rx="12" ry="5" fill="#c6c2c0" opacity="0.8" transform="rotate(-10 308 168)" filter="url(#b2)"/></g></g>
</g>

</svg>

<div id="panel" class="abs">
<div class="abs" style="left:0;top:0;width:316px;height:1px;background:#1a1a1a;"></div>
<div class="abs" style="left:0;top:1px;width:316px;height:16px;background:#82bd10;"></div>
<div class="abs" style="left:0;top:17px;width:1px;height:416px;background:#393939;"></div>
<div class="abs" style="left:0;top:17px;width:316px;height:1px;background:#1e1d22;"></div>
<div class="abs" style="left:315px;top:17px;width:1px;height:416px;background:#343434;"></div>
<div class="t b" style="left:66.0px;width:200px;text-align:center;top:4.1px;color:#101010;">Motion Link</div>
<svg class="abs" style="left:293px;top:3px" width="12" height="12" viewBox="0 0 12 12"><circle cx="5.700" cy="5.700" r="5" fill="none" stroke="#1c2a04" stroke-width="1"/><path d="M3.500,3.500 L7.900,7.900 M7.900,3.500 L3.500,7.900" stroke="#1c2a04" stroke-width="1" fill="none"/></svg>
<div class="t " style="left:12.0px;top:29.3px;">Load a Dummy Character to apply motion.</div>
<div class="t " style="left:12.0px;top:40.8px;color:#6fa5dc;text-decoration:underline;">Know more</div>
<div class="box" style="left:284px;top:31px;width:21px;height:20px;border-color:#3b3b3b;border-radius:2px;background:#262626;"></div>
<svg class="abs" style="left:284px;top:30px" width="21" height="21" viewBox="0 0 21 21"><g stroke="#3d3d3d" stroke-width="1" fill="none"><circle cx="10.500" cy="10.500" r="4"/><path d="M10.500,3.500v2.500M10.500,15v2.500M3.500,10.500h2.500M15,10.500h2.500M5.500,5.500l1.800,1.800M13.700,13.700l1.800,1.800M15.500,5.500l-1.800,1.800M7.300,13.700l-1.800,1.800"/></g></svg>
<div class="box" style="left:12px;top:60px;width:293px;height:19px;background:#242424;"></div>
<div class="t " style="left:58.0px;width:200px;text-align:center;top:65.1px;">Add Dummy Character(s)</div>
<div class="t " style="left:12.0px;top:92.0px;">Target:</div>
<div class="box" style="left:45px;top:87px;width:259px;height:20px;background:#232323;border-radius:2px;"></div>
<div class="abs" style="left:48.5px;top:92.5px;width:24px;height:10px;background:#b5b5b5;"></div>
<div class="t " style="left:67.0px;width:200px;text-align:center;top:92.0px;">CTA_Dummy</div>
<div class="abs" style="left:292.29999999999995px;top:96.8px;width:0;height:0;border-left:4px solid transparent;border-right:4px solid transparent;border-top:5px solid #e0e0e0;"></div>
<div class="abs" style="left:12px;top:115px;width:292px;height:38px;border-radius:5px;background:#82bd10;"></div>
<svg class="abs" style="left:94px;top:122px" width="28" height="24" viewBox="546 153 28 24"><g fill="none" stroke="#14200a" stroke-width="1.300" stroke-linejoin="miter">
<path d="M556.100,161.600 L561.400,156 L567.100,161.300 L565.200,163.200"/>
<path d="M554.300,164.300 L548.300,169.400 L553.600,174.800 L558.600,169.100"/>
<path d="M554.600,168.200 L561.100,161.900"/>
<circle cx="565.800" cy="170.100" r="4.300"/>
<path d="M563.600,170.200 L565.500,172 L568.400,168.600"/>
</g></svg>
<div class="t b" style="left:126.6px;top:130.3px;color:#101010;">Link Activated</div>
<!-- fieldset 1 -->
<div class="box" style="left:12px;top:165px;width:293px;height:142px;"></div>
<div class="abs" style="left:20px;top:159px;width:87px;height:12px;background:#282828;"></div>
<div class="t " style="left:23.7px;top:160.0px;">Camera Projection</div>
<div class="t " style="left:23.7px;top:182.0px;">Projection Angle:</div>
<div class="abs" style="left:23.69999999999999px;top:203.2px;width:214px;height:1.600px;background:#b4b4b4;"></div>
<div class="abs" style="left:159.3px;top:198.39999999999998px;width:11.6px;height:11.6px;border-radius:50%;background:#d2d2d2;"></div>
<div class="abs" style="left:28.2px;top:218px;width:1px;height:4px;background:#bdbdbd;"></div><div class="abs" style="left:53.5px;top:218px;width:1px;height:4px;background:#bdbdbd;"></div><div class="abs" style="left:78.8px;top:218px;width:1px;height:4px;background:#bdbdbd;"></div><div class="abs" style="left:104.1px;top:218px;width:1px;height:4px;background:#bdbdbd;"></div><div class="abs" style="left:129.4px;top:218px;width:1px;height:4px;background:#bdbdbd;"></div><div class="abs" style="left:154.7px;top:218px;width:1px;height:4px;background:#bdbdbd;"></div><div class="abs" style="left:180.0px;top:218px;width:1px;height:4px;background:#bdbdbd;"></div><div class="abs" style="left:205.3px;top:218px;width:1px;height:4px;background:#bdbdbd;"></div><div class="abs" style="left:230.6px;top:218px;width:1px;height:4px;background:#bdbdbd;"></div>
<div class="t " style="left:-71.3px;width:200px;text-align:center;top:227.0px;">-180</div><div class="t " style="left:-46.0px;width:200px;text-align:center;top:227.0px;">-135</div><div class="t " style="left:-20.7px;width:200px;text-align:center;top:227.0px;">-90</div><div class="t " style="left:4.6px;width:200px;text-align:center;top:227.0px;">-45</div><div class="t " style="left:29.9px;width:200px;text-align:center;top:227.0px;">0</div><div class="t " style="left:55.2px;width:200px;text-align:center;top:227.0px;">45</div><div class="t " style="left:80.5px;width:200px;text-align:center;top:227.0px;">90</div><div class="t " style="left:105.8px;width:200px;text-align:center;top:227.0px;">135</div><div class="t " style="left:131.1px;width:200px;text-align:center;top:227.0px;">180</div>
<div class="box" style="left:245px;top:193px;width:48px;height:20px;background:#242424;"></div>
<div class="abs" style="left:280px;top:194px;width:1px;height:18px;background:#4b4b4b;"></div>
<div class="abs" style="left:281px;top:203px;width:11px;height:1px;background:#4b4b4b;"></div>
<div class="t " style="left:252.0px;top:199.1px;">62</div>
<div class="abs" style="left:283.4px;top:197px;width:0;height:0;border-left:3px solid transparent;border-right:3px solid transparent;border-bottom:4px solid #d8d8d8;"></div>
<div class="abs" style="left:283.4px;top:205.5px;width:0;height:0;border-left:3px solid transparent;border-right:3px solid transparent;border-top:4px solid #d8d8d8;"></div>
<div class="cb" style="left:23px;top:252px;"></div><svg class="abs" style="left:22px;top:248px" width="18" height="18" viewBox="0 0 18 18"><path d="M3.500,9.500 L6.800,14 L15.500,2" fill="none" stroke="#d6d6d6" stroke-width="1.400"/></svg>
<div class="t " style="left:42.5px;top:252.1px;">Lock to Hip</div>
<div class="cb" style="left:23px;top:280px;"></div><svg class="abs" style="left:22px;top:276px" width="18" height="18" viewBox="0 0 18 18"><path d="M3.500,9.500 L6.800,14 L15.500,2" fill="none" stroke="#d6d6d6" stroke-width="1.400"/></svg>
<div class="t " style="left:42.5px;top:279.4px;">Camera Tracking</div>
<div class="box" style="left:178px;top:274px;width:115px;height:20px;background:#262626;"></div>
<div class="t " style="left:135.7px;width:200px;text-align:center;top:278.4px;">Reset Camera</div>
<!-- fieldset 2 -->
<div class="box" style="left:12px;top:319px;width:293px;height:55px;"></div>
<div class="abs" style="left:19px;top:313px;width:138px;height:12px;background:#282828;"></div>
<div class="cb" style="left:23px;top:313px;"></div><svg class="abs" style="left:22px;top:309px" width="18" height="18" viewBox="0 0 18 18"><path d="M3.500,9.500 L6.800,14 L15.500,2" fill="none" stroke="#d6d6d6" stroke-width="1.400"/></svg>
<div class="t " style="left:42.5px;top:313.4px;">Send to Cartoon Animator</div>
<div class="abs" style="left:41.199999999999974px;top:333.0px;width:9.4px;height:9.4px;box-sizing:border-box;border:1.200px solid #cfcfcf;border-radius:50%;"></div>
<div class="abs" style="left:43.699999999999974px;top:335.5px;width:4.4px;height:4.4px;background:#d8d8d8;border-radius:50%;"></div>
<div class="t " style="left:57.8px;top:332.0px;">Preview</div>
<div class="abs" style="left:41.199999999999974px;top:354.8px;width:9.4px;height:9.4px;box-sizing:border-box;border:1.200px solid #cfcfcf;border-radius:50%;"></div>
<div class="t " style="left:57.8px;top:353.8px;">Record</div>
<div class="cb" style="left:161px;top:355px;"></div>
<div class="t " style="left:179.7px;top:354.8px;">Flip Body</div>
<div class="abs" style="left:12px;top:382px;width:293px;height:39px;box-sizing:border-box;border:1px solid #8c8c8c;border-radius:6px;"></div>
<svg class="abs" style="left:97px;top:394px" width="20" height="15" viewBox="549 425 20 15"><path d="M551,432.400 C554.500,426.200 564,426.200 567.500,432.400 C564,438.600 554.500,438.600 551,432.400Z" fill="none" stroke="#d8d8d8" stroke-width="1.300"/><circle cx="559.200" cy="431.300" r="3.200" fill="#d8d8d8"/></svg>
<div class="t b" style="left:124.6px;top:395.8px;color:#e0e0e0;">Preview in CTA</div>
</div>

</body></html>
